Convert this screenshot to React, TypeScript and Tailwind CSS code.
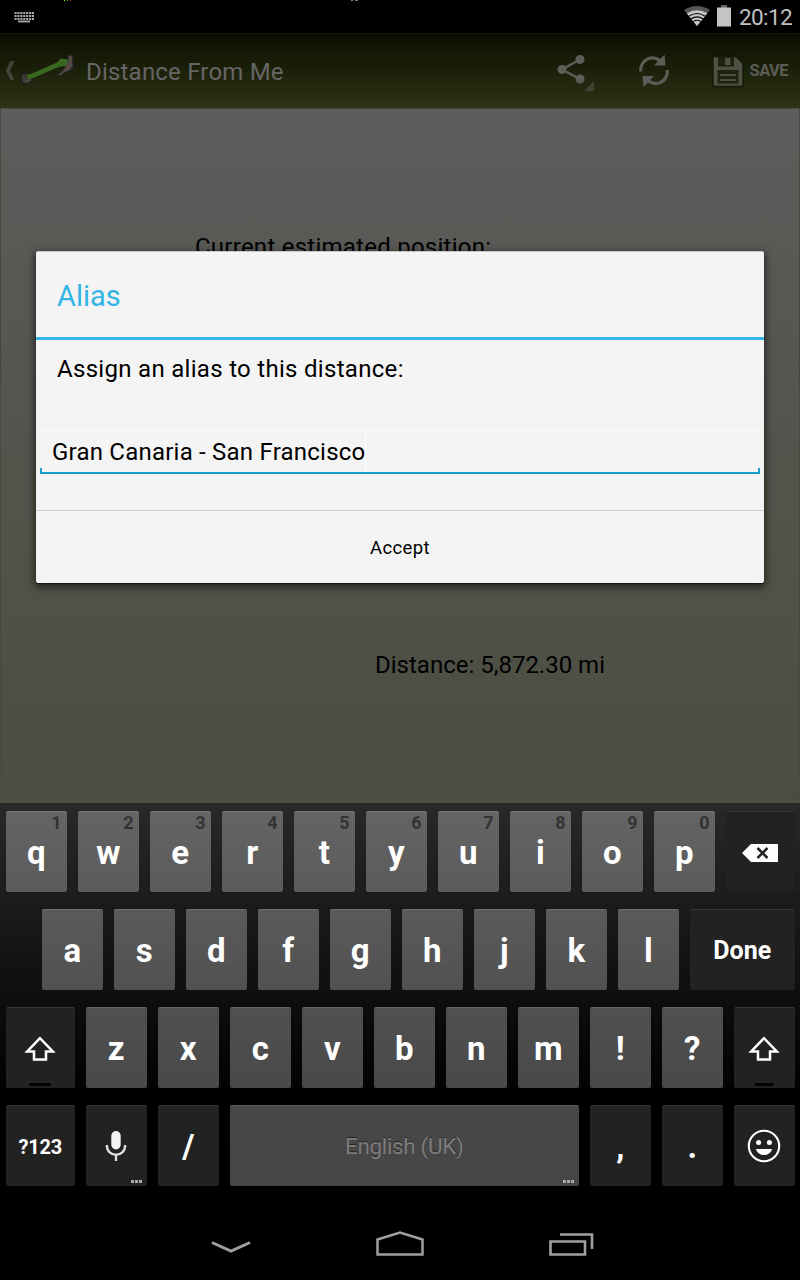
import type { ReactNode } from "react";
import { clsx } from "clsx";

const TOP_ROW = ["q", "w", "e", "r", "t", "y", "u", "i", "o", "p"];
const MIDDLE_ROW = ["a", "s", "d", "f", "g", "h", "j", "k", "l"];
const BOTTOM_ROW = ["z", "x", "c", "v", "b", "n", "m", "!", "?"];

type Tone = "r1" | "r2" | "r3" | "r4" | "dark";

// letter keys get darker towards the bottom of the keyboard
const TONES: Record<Tone, string> = {
  r1: "bg-linear-to-b from-[#646464] to-[#5b5b5b] border-t-[#777777]",
  r2: "bg-linear-to-b from-[#5a5a5a] to-[#515151] border-t-[#707070]",
  r3: "bg-linear-to-b from-[#505050] to-[#494949] border-t-[#686868]",
  r4: "bg-linear-to-b from-[#484848] to-[#464646] border-t-[#606060]",
  dark: "bg-[#222222] border-t-[#363636]",
};

interface KeyProps {
  children: ReactNode;
  tone?: Tone;
  hint?: string;
  more?: boolean;
  className?: string;
}

function Key({ children, tone = "dark", hint, more, className }: KeyProps) {
  return (
    <button
      className={clsx(
        "relative flex h-[81px] shrink-0 items-center justify-center rounded-[2px] border-t pt-[2px] font-bold text-white",
        "shadow-[0_0_1px_#00000080]",
        TONES[tone],
        className ?? "w-[60.5px] text-[33px]"
      )}
    >
      {hint && (
        <span className="absolute top-0 right-[5px] text-[18px] leading-[22px] text-[#333333]">{hint}</span>
      )}
      {children}
      {more && (
        <span className="absolute right-[5px] bottom-[3px] flex gap-[1px]">
          <i className="size-[3px] bg-[#aaaaaa]" />
          <i className="size-[3px] bg-[#aaaaaa]" />
          <i className="size-[3px] bg-[#aaaaaa]" />
        </span>
      )}
    </button>
  );
}

function ShiftKey({ className, bar }: { className: string; bar: string }) {
  return (
    <Key className={className}>
      <svg width="32" height="26" viewBox="0 0 32 26" className="-ml-px" fill="none" stroke="#fff" strokeWidth="2.5">
        <path d="M16 2.2 3.2 15.5H10V23.4H22V15.5H28.8Z" />
      </svg>
      <span className={clsx("absolute bottom-[2px] h-[3px] rounded-sm bg-black", bar)} />
    </Key>
  );
}

function StatusBar() {
  return (
    <div className="flex h-[33px] items-center bg-black pr-2 pl-3.5">
      <svg width="20" height="12" viewBox="0 0 20 12" className="mt-[1px]">
        <path d="M.5 2H20M.5 5H20M.5 8H20" stroke="#aaa" strokeWidth="2" strokeDasharray="2.1 .8" />
        <path d="M4 10.5H16" stroke="#aaa" strokeWidth="1.8" />
      </svg>
      <svg width="26" height="20" viewBox="0 0 26 20" className="mt-[-1px] ml-auto">
        <path d="M0 4Q13-4 26 4L13 20Z" fill="#555" />
        <path d="M2.8 7.2Q13 1.2 23.2 7.2L13 20Z" fill="#c6c6c6" />
        <g fill="none" stroke="#000" strokeWidth="1.1">
          <path d="M5.2 10Q13 5 20.8 10M7.2 12.8Q13 9 18.8 12.8M9.2 15.6Q13 13 16.8 15.6" />
        </g>
      </svg>
      <svg width="14" height="22" viewBox="0 0 14 22" className="mt-[-2px] ml-[7px]">
        <path d="M4 0.5h6v2h4v19H0v-19h4z" fill="#c4c4c4" />
        <path d="M4 0.5h6v2H4z" fill="#666" />
      </svg>
      <span className="mt-px ml-2 text-[22.5px] leading-8 tracking-[-0.6px] text-[#c0c0c0]">20:12</span>
    </div>
  );
}

function AppLogo() {
  return (
    <svg width="56" height="34" viewBox="0 0 56 34" className="ml-[4px]">
      <path d="M1.5 22 4 19 8 19 9 22 14 23 13 27 10 30 5 30.5 2 27Z" fill="#39352f" stroke="#181b1c" strokeWidth="1.3" />
      <path d="M5 26.5Q8 28 11 25.5" stroke="#4f4741" strokeWidth="2.5" fill="none" />
      <path d="M49 1.5 52 0.8 54 3 53.5 8 54.5 12 51 16.5 46 18.5 42 21.5 37.5 21.5 43 17 46 13 45.5 9 49 6Z" fill="#554941" stroke="#20222a" strokeWidth="1.2" />
      <path d="M8 20.5 12 20 39 8 41 4.5 49.5 5.5 46.5 12 41 12.5 14 24 8.5 25Z" fill="#38691f" />
    </svg>
  );
}

function ActionBar() {
  return (
    <header className="flex h-[75px] items-center border-t border-[#171a0b] bg-linear-to-b/srgb from-[#0b0e00] to-[#2d3314]">
      <svg width="10" height="22" viewBox="0 0 10 22" className="ml-[5px]">
        <path d="M5.5 1H9.5L5 10.5 9.5 20H5.5L.8 10.5Z" fill="#42453a" />
      </svg>
      <AppLogo />
      <h1 className="mt-[2px] ml-[11px] text-[24px] tracking-[0.2px] text-[#666666]">Distance From Me</h1>

      <svg width="38" height="40" viewBox="0 0 38 40" className="mt-[-1px] ml-auto">
        <path d="M23 8.5 5 18.5 23 28" fill="none" stroke="#5c5d57" strokeWidth="2.5" />
        <circle cx="23" cy="8.5" r="4.5" fill="#5c5d57" />
        <circle cx="5" cy="18.5" r="4.5" fill="#5c5d57" />
        <circle cx="23" cy="28" r="4.5" fill="#5c5d57" />
        <path d="M37 30V40H27Z" fill="#404334" />
      </svg>
      <svg width="32" height="34" viewBox="0 0 32 34" className="mt-[-1px] ml-[43px]">
        <g fill="none" stroke="#5c5d57" strokeWidth="3.2">
          <path d="M2.6 17.5C2.6 5 14 .5 22.5 7" />
          <path d="M29.4 16C29.4 28.5 18 33 9.5 26.5" />
        </g>
        <path d="M26.5 .5 27.5 11.5H16ZM5.5 33 4.5 22H16Z" fill="#5c5d57" />
      </svg>
      <svg width="32" height="33" viewBox="0 0 32 33" className="ml-[42px]">
        <path d="M1 1.5H24L31 8.5V31.5H1Z" fill="#4d5043" stroke="#14170a" strokeWidth="1.4" />
        <path d="M6 1.5H22V11.5H6ZM5.5 15H26.5V28.5H5.5Z" fill="#1e220d" />
        <path d="M13 3H18.5V10H13Z" fill="#4d5043" />
        <path d="M8 20H24M8 25H24" stroke="#4d5043" strokeWidth="2" />
      </svg>
      <span className="mr-[12px] ml-[6px] text-[16.5px] font-bold tracking-[-0.55px] text-[#5c5d56]">SAVE</span>
    </header>
  );
}

function AliasDialog() {
  return (
    <section className="absolute top-[142px] left-[35px] flex h-[332px] w-[728px] flex-col rounded-[2px] border-t border-[#c9c9c8] bg-[#f4f4f4] shadow-[0_3px_8px_1px_#000000a0,0_1px_1px_#00000080]">
      <h2 className="h-[88px] border-b-3 border-[#33b5e5] pt-[24px] pl-[21px] text-[29px] leading-10 text-[#33b5e5]">
        Alias
      </h2>
      <p className="h-[86px] border-b border-[#ececec] pt-[13px] pl-[21px] text-[24px] leading-8 tracking-[0.3px] text-black">
        Assign an alias to this distance:
      </p>
      <div className="mx-1 pt-[10px]">
        <div className="flex h-8 items-center pl-3 text-[24px] text-black">
          <span className="border-r border-white tracking-[0.22px]">Gran Canaria - San Francisco</span>
        </div>
        <div className="h-[6px] border-x-2 border-b-2 border-[#169fcc]" />
      </div>
      <button className="mt-auto h-[73px] border-t border-[#cfcfcf] pt-[3px] text-[18.5px] tracking-[0.4px] text-black">
        Accept
      </button>
    </section>
  );
}

function Keyboard() {
  return (
    <div className="flex h-[397px] flex-col gap-[17px] bg-linear-to-b/srgb from-[#292929] to-black to-75% pt-[8px] pl-1.5">
      <div className="flex gap-[11.5px]">
        {TOP_ROW.map((letter, i) => (
          <Key key={letter} tone="r1" hint={String((i + 1) % 10)}>
            {letter}
          </Key>
        ))}
        <Key className="w-[68.5px]">
          <svg width="36" height="18" viewBox="0 0 36 18" className="-mt-px">
            <path d="M0 9 9 0H36V18H9Z" fill="#fff" />
            <path d="m15.5 4 10 10m0-10-10 10" stroke="#222" strokeWidth="2.5" />
          </svg>
        </Key>
      </div>

      <div className="flex gap-[11.5px] pl-9">
        {MIDDLE_ROW.map((letter) => (
          <Key key={letter} tone="r2">
            {letter}
          </Key>
        ))}
        <Key className="w-[104.5px] text-[25px]">Done</Key>
      </div>

      <div className="flex gap-[11.5px]">
        <ShiftKey className="w-[68.5px]" bar="w-[22px]" />
        {BOTTOM_ROW.map((letter) => (
          <Key key={letter} tone="r3">
            {letter}
          </Key>
        ))}
        <ShiftKey className="w-[60.5px]" bar="w-[19px]" />
      </div>

      <div className="flex gap-[11.5px]">
        <Key className="w-[68.5px] text-[20px] tracking-[-0.2px]">?123</Key>
        <Key more className="w-[60.5px]">
          <svg width="22" height="30" viewBox="0 0 22 30" className="mt-[-3px] ml-[-1px]" fill="none">
            <rect x="6.3" y="0" width="9.4" height="18.5" rx="4.7" fill="#f2f2f2" />
            <path d="M1.8 14C1.8 27 20.2 27 20.2 14M11 23V30" stroke="#ddd" strokeWidth="2.4" />
          </svg>
        </Key>
        <Key>/</Key>
        <Key tone="r4" more className="w-[348.5px] text-[22.5px] tracking-[-0.35px]">
          <span className="font-normal text-[#7c7c7c] [text-shadow:0_-1px_0_#252525]">English (UK)</span>
        </Key>
        <Key>,</Key>
        <Key>.</Key>
        <Key className="w-[60.5px]">
          <svg width="34" height="34" viewBox="0 0 34 34" className="mt-[-3px] ml-[-1px]">
            <circle cx="17" cy="17" r="15.2" fill="none" stroke="#fff" strokeWidth="2.1" />
            <circle cx="11.6" cy="13.5" r="2.5" fill="#fff" />
            <circle cx="22.4" cy="13.5" r="2.5" fill="#fff" />
            <path d="M9 20H25C23 28 11 28 9 20Z" fill="#fff" />
          </svg>
        </Key>
      </div>
    </div>
  );
}

function NavigationBar() {
  return (
    <nav className="flex h-20 items-start bg-black pt-[30px] pl-[211px]">
      <svg width="40" height="27" viewBox="0 0 40 27" fill="none" stroke="#a0a0a0" strokeWidth="3">
        <path d="M1 12.5 20 21 39 12.5" />
      </svg>
      <svg width="48" height="27" viewBox="0 0 48 27" className="ml-[125px]" fill="none" stroke="#a0a0a0" strokeWidth="2.5">
        <path d="M1.5 24.5V9.5L24 2.5 46.5 9.5V24.5Z" />
      </svg>
      <svg width="46" height="27" viewBox="0 0 46 27" className="ml-[125px]" fill="none" stroke="#a0a0a0" strokeWidth="2.6">
        <path d="M1.5 11.5H36V24.5H1.5ZM11 4.5H43V19" />
      </svg>
    </nav>
  );
}

export default function App() {
  return (
    <div className="relative h-[1280px] w-[800px] overflow-hidden bg-black font-[Roboto,sans-serif]">
      <StatusBar />
      <ActionBar />
      <main className="relative flex h-[695px] flex-col border-x border-t border-[#484841] bg-linear-to-b from-[#5d5d5d] via-[#53544c] to-[#4c4d40]">
        <p className="mt-[122px] ml-[194px] text-[24px] leading-8 tracking-[0.25px] text-black">
          Current estimated position:
        </p>
        <p className="mt-[386px] ml-[374px] text-[24px] leading-8 text-black">
          Distance: 5,872.30 mi
        </p>
        <AliasDialog />
      </main>
      <Keyboard />
      <NavigationBar />

      {/* stray pixels along the top edge of the display */}
      <span className="absolute top-0 left-16 flex h-px gap-[2px]">
        <i className="w-px bg-[#99ff00]" />
        <i className="w-px bg-[#66bb33]" />
        <i className="w-px bg-[#cc3300]" />
      </span>
      <span className="absolute top-0 left-[351px] flex h-px gap-[2px]">
        <i className="w-[2px] bg-[#888888]" />
        <i className="w-[3px] bg-[#777777]" />
      </span>
    </div>
  );
}
